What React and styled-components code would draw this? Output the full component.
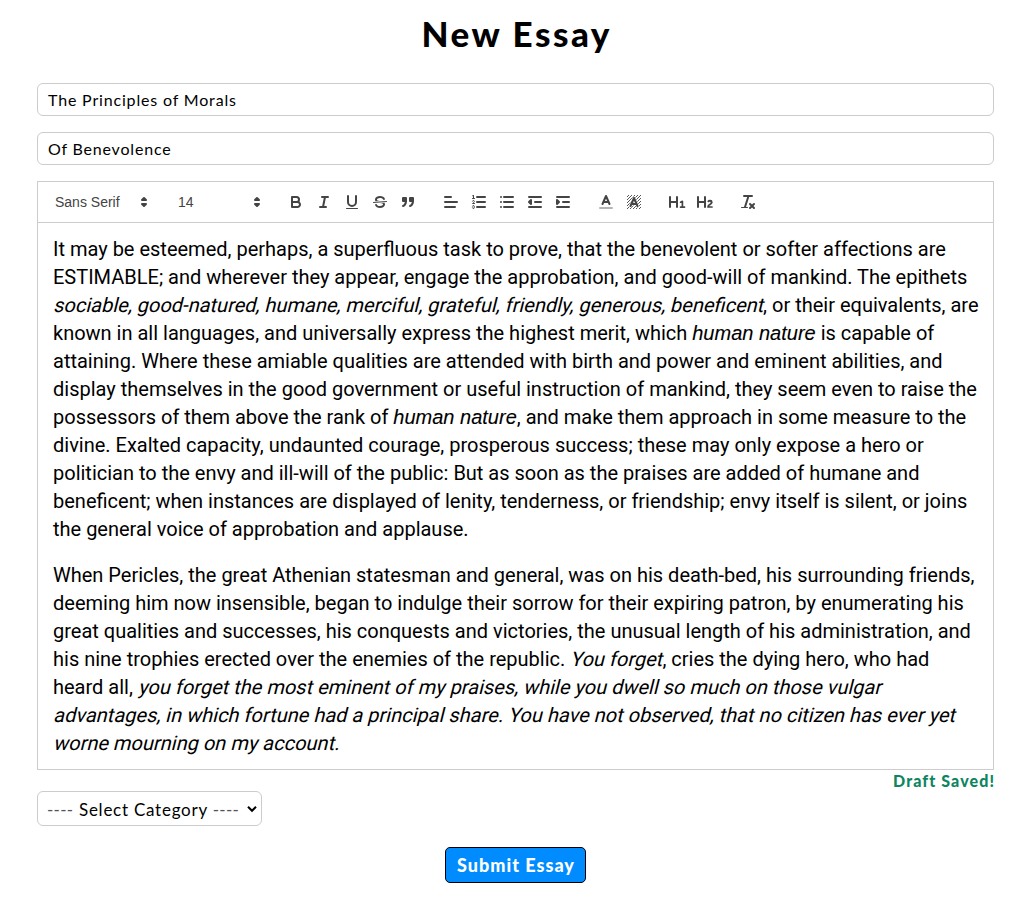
import React from "react";
import styled, { createGlobalStyle } from "styled-components";

const Global = createGlobalStyle`
  * { box-sizing: border-box; }
  body { margin: 0; background: #fff; color: #000; font-family: Lato, sans-serif; }
`;
const Page = styled.main`
  width: 1031px;
  height: 910px;
  padding: 9px 37px 0;
  display: flex;
  flex-direction: column;
`;
const Title = styled.h1`
  margin: 0 0 26px;
  height: 48px;
  line-height: 48px;
  text-align: center;
  font-size: 35px;
  font-weight: 900;
  white-space: nowrap;
`;
const Fit = styled.span`
  letter-spacing: ${(p) => p.$ls || 0}px;
  margin-right: ${(p) => -(p.$ls || 0)}px;
`;
const Field = styled.div`
  height: 33px;
  margin-bottom: 16px;
  padding: 0 10px;
  border: 1px solid #ccc;
  border-radius: 6px;
  font-size: 16px;
  line-height: 32px;
  white-space: nowrap;
`;
const Toolbar = styled.div`
  height: 42px;
  padding: 8px;
  border: 1px solid #ccc;
  display: flex;
  gap: 15px;
`;
const Group = styled.div`
  display: flex;
`;
const Tool = styled.span`
  width: 28px;
  height: 24px;
  padding: 3px 5px;
  svg { display: block; width: 18px; height: 18px; }
`;
const Picker = styled.div`
  width: ${(p) => p.$w}px;
  height: 24px;
  padding: 0 1px 0 9px;
  display: flex;
  align-items: center;
  justify-content: space-between;
  font: 400 14px/24px "Liberation Sans", Arial, sans-serif;
  color: #444;
  svg { width: 18px; height: 18px; }
`;
const Glyph = styled.svg.attrs({ viewBox: "0 0 18 18" })`
  fill: none;
  stroke: #444;
  stroke-width: 2;
  stroke-linecap: round;
  stroke-linejoin: round;
  .fill { fill: #444; }
  .solid { fill: #444; stroke: none; }
  .thin { stroke-width: 1; }
  .halo { stroke: #fff; stroke-width: 3.5; opacity: 0.7; }
  .hatch { stroke-width: 0.9; stroke-linecap: butt; }
`;
const Editor = styled.div`
  height: 547px;
  border: 1px solid #ccc;
  border-top: 0;
  padding: 12px 15px;
  font: 400 20px/28px Roboto, sans-serif;
`;
const Paragraph = styled.p`
  margin: 0 0 18px;
`;
const Line = styled.span`
  display: block;
  height: 28px;
  white-space: nowrap;
`;
const Slanted = styled.em`
  display: inline-block;
  font-style: normal;
  transform: skewX(-14deg);
  transform-origin: 0 21px;
`;
const Phrase = styled.em`
  font-family: "Liberation Sans", Arial, sans-serif;
  -webkit-text-stroke: 0.1px #000;
`;
const Status = styled.div`
  height: 21px;
  line-height: 22px;
  text-align: right;
  font-size: 16px;
  font-weight: 900;
  color: #0d8560;
  white-space: nowrap;
`;
const Select = styled.div`
  width: 225px;
  height: 35px;
  padding: 1px 4px 0 9px;
  display: flex;
  align-items: center;
  justify-content: space-between;
  border: 1px solid #ccc;
  border-radius: 6px;
  font-size: 17px;
  white-space: nowrap;
  svg { width: 10px; height: 8px; }
`;
const Dashes = styled.span`
  color: #555;
  letter-spacing: 0.3px;
`;
const Choice = styled.span`
  display: flex;
  gap: 5.5px;
`;
const Submit = styled.button`
  align-self: center;
  width: 141px;
  height: 36px;
  margin-top: 21px;
  padding: 0;
  border: 1px solid #000;
  border-radius: 5px;
  background: #008cff;
  color: #fff;
  font: 900 18px/32px Lato, sans-serif;
  white-space: nowrap;
`;

const Arrows = () => (
  <Glyph><polygon className="fill" points="7 11 9 13 11 11 7 11" /><polygon className="fill" points="7 7 9 5 11 7 7 7" /></Glyph>
);

const icons = {
  bold: <><path d="M5,4H9.5A2.5,2.5,0,0,1,12,6.5v0A2.5,2.5,0,0,1,9.5,9H5Z" /><path d="M5,9h5.5A2.5,2.5,0,0,1,13,11.5v0A2.5,2.5,0,0,1,10.5,14H5Z" /></>,
  italic: <path d="M7 4H13M5 14H11M8 14L10 4" />,
  underline: <><path d="M5,3V9a4.012,4.012,0,0,0,4,4H9a4.012,4.012,0,0,0,4-4V3" /><rect className="solid" height="1" rx="0.5" width="12" x="3" y="15" /></>,
  strike: <><path className="thin" d="M15.5 8.5L2.5 9.5" /><path className="solid" d="M9.007,8C6.542,7.791,6,7.519,6,6.5,6,5.792,7.283,5,9,5c1.571,0,2.765.679,2.969,1.309a1,1,0,0,0,1.9-.617C13.356,4.106,11.354,3,9,3,6.2,3,4,4.538,4,6.5a3.2,3.2,0,0,0,.5,1.843Z" /><path className="solid" d="M8.984,10C11.457,10.208,12,10.479,12,11.5c0,0.708-1.283,1.5-3,1.5-1.571,0-2.765-.679-2.969-1.309a1,1,0,1,0-1.9.617C4.644,13.894,6.646,15,9,15c2.8,0,5-1.538,5-3.5a3.2,3.2,0,0,0-.5-1.843Z" /></>,
  quote: <><rect className="fill" height="3" width="3" x="4" y="5" /><rect className="fill" height="3" width="3" x="11" y="5" /><path className="fill" d="M7,8c0,4.031-3,5-3,5" /><path className="fill" d="M14,8c0,4.031-3,5-3,5" /></>,
  align: <path d="M3 9H15M3 14H13M3 4H9" />,
  ordered: <><path d="M7 4H15M7 9H15M7 14H15" /><path className="thin" d="M2.5 5.5H4.5" /><path className="solid" d="M3.5,6A0.5,0.5,0,0,1,3,5.5V3.085l-0.276.138A0.5,0.5,0,0,1,2.053,3c-0.124-.247-0.023-0.324.224-0.447l1-.5A0.5,0.5,0,0,1,4,2.5v3A0.5,0.5,0,0,1,3.5,6Z" /><path className="thin" d="M4.5,10.5h-2c0-.234,1.85-1.076,1.85-2.234A0.959,0.959,0,0,0,2.5,8.156" /><path className="thin" d="M2.5,14.846a0.959,0.959,0,0,0,1.85-.109A0.7,0.7,0,0,0,3.75,14a0.688,0.688,0,0,0,.6-0.736,0.959,0.959,0,0,0-1.85-.109" /></>,
  bullet: <path d="M6 4H15M6 9H15M6 14H15M3 4H3M3 9H3M3 14H3" />,
  outdent: <><path d="M3 14H15M3 4H15M9 9H15" /><polyline className="fill" points="5 7 5 11 3 9 5 7" /></>,
  indent: <><path d="M3 14H15M3 4H15M9 9H15" /><polyline className="fill" points="3 7 3 11 5 9 3 7" /></>,
  color: <><path d="M3 15H15" opacity=".4" /><path d="M5.5 11L9 3L12.5 11M11.63 9H6.38" /></>,
  highlight: (
    <>
      <path className="hatch" d="M2 4L4 2M2 7L7 2M2 10L10 2M2 13L13 2M2 16L16 2M5 16L16 5M8 16L16 8M11 16L16 11M14 16L16 14" />
      <path className="halo" d="M5.5 13L9 5L12.5 13M11.63 11H6.38" />
      <path d="M5.5 13L9 5L12.5 13M11.63 11H6.38" />
    </>
  ),
  heading1: <><path className="solid" d="M10,4V14a1,1,0,0,1-2,0V10H3v4a1,1,0,0,1-2,0V4A1,1,0,0,1,3,4V8H8V4a1,1,0,0,1,2,0Z" /><path d="M12.6 9.2L14.4 8.4V14M12.5 14.1H16.5" strokeWidth="1.7" /></>,
  heading2: <><path className="solid" d="M10,4V14a1,1,0,0,1-2,0V10H3v4a1,1,0,0,1-2,0V4A1,1,0,0,1,3,4V8H8V4a1,1,0,0,1,2,0Z" /><path className="solid" d="M16.73975,13.81445v.43945a.54085.54085,0,0,1-.605.60547H11.855a.58392.58392,0,0,1-.64893-.60547V14.0127c0-2.90527,3.39941-3.42187,3.39941-4.55469a.77675.77675,0,0,0-.84717-.78125,1.17684,1.17684,0,0,0-.83594.38477c-.2749.26367-.561.374-.85791.13184l-.4292-.34082c-.30811-.24219-.38525-.51758-.1543-.81445a2.97155,2.97155,0,0,1,2.45361-1.17676,2.45393,2.45393,0,0,1,2.68408,2.40918c0,2.45312-3.1792,2.92676-3.27832,3.93848h2.79443A.54085.54085,0,0,1,16.73975,13.81445Z" /></>,
  clean: <><path d="M5 3H13M6 14L9.5 3M11 11L15 15M15 11L11 15" /><rect className="solid" height="1" rx="0.5" width="7" x="2" y="14" /></>,
};

const ToolButtons = ({ names }) => (
  <Group>{names.map((n) => <Tool key={n}><Glyph>{icons[n]}</Glyph></Tool>)}</Group>
);

const first = [
  "It may be esteemed, perhaps, a superfluous task to prove, that the benevolent or softer affections are",
  "ESTIMABLE; and wherever they appear, engage the approbation, and good-will of mankind. The epithets",
  <><Slanted>sociable, good-natured, humane, merciful, grateful, friendly, generous, beneficent</Slanted>, or their equivalents, are</>,
  <>known in all languages, and universally express the highest merit, which <Phrase>human nature</Phrase> is capable of</>,
  "attaining. Where these amiable qualities are attended with birth and power and eminent abilities, and",
  "display themselves in the good government or useful instruction of mankind, they seem even to raise the",
  <>possessors of them above the rank of <Phrase>human nature</Phrase>, and make them approach in some measure to the</>,
  "divine. Exalted capacity, undaunted courage, prosperous success; these may only expose a hero or",
  "politician to the envy and ill-will of the public: But as soon as the praises are added of humane and",
  "beneficent; when instances are displayed of lenity, tenderness, or friendship; envy itself is silent, or joins",
  "the general voice of approbation and applause.",
];
const second = [
  "When Pericles, the great Athenian statesman and general, was on his death-bed, his surrounding friends,",
  "deeming him now insensible, began to indulge their sorrow for their expiring patron, by enumerating his",
  "great qualities and successes, his conquests and victories, the unusual length of his administration, and",
  <>his nine trophies erected over the enemies of the republic. <Slanted>You forget</Slanted>, cries the dying hero, who had</>,
  <>heard all, <Slanted>you forget the most eminent of my praises, while you dwell so much on those vulgar</Slanted></>,
  <Slanted>advantages, in which fortune had a principal share. You have not observed, that no citizen has ever yet</Slanted>,
  <Slanted>worne mourning on my account.</Slanted>,
];

export default function App() {
  return (
    <>
      <Global />
      <Page>
        <Title><Fit $ls={2.5}>New Essay</Fit></Title>
        <Field><Fit $ls={0.83}>The Principles of Morals</Fit></Field>
        <Field><Fit $ls={0.8}>Of Benevolence</Fit></Field>
        <Toolbar>
          <Picker $w={108}>Sans Serif<Arrows /></Picker>
          <Picker $w={98}>14<Arrows /></Picker>
          <ToolButtons names={["bold", "italic", "underline", "strike", "quote"]} />
          <ToolButtons names={["align", "ordered", "bullet", "outdent", "indent"]} />
          <ToolButtons names={["color", "highlight"]} />
          <ToolButtons names={["heading1", "heading2"]} />
          <ToolButtons names={["clean"]} />
        </Toolbar>
        <Editor>
          <Paragraph>{first.map((l, i) => <Line key={i}>{l}</Line>)}</Paragraph>
          <Paragraph>{second.map((l, i) => <Line key={i}>{l}</Line>)}</Paragraph>
        </Editor>
        <Status><Fit $ls={1.1}>Draft Saved!</Fit></Status>
        <Select>
          <Choice><Dashes>----</Dashes><Fit $ls={0.75}>Select Category</Fit><Dashes>----</Dashes></Choice>
          <svg viewBox="0 0 10 8" fill="none" stroke="#000" strokeWidth="2"><path d="M1 1.8L5 5.8L9 1.8" /></svg>
        </Select>
        <Submit><Fit $ls={1}>Submit Essay</Fit></Submit>
      </Page>
    </>
  );
}
